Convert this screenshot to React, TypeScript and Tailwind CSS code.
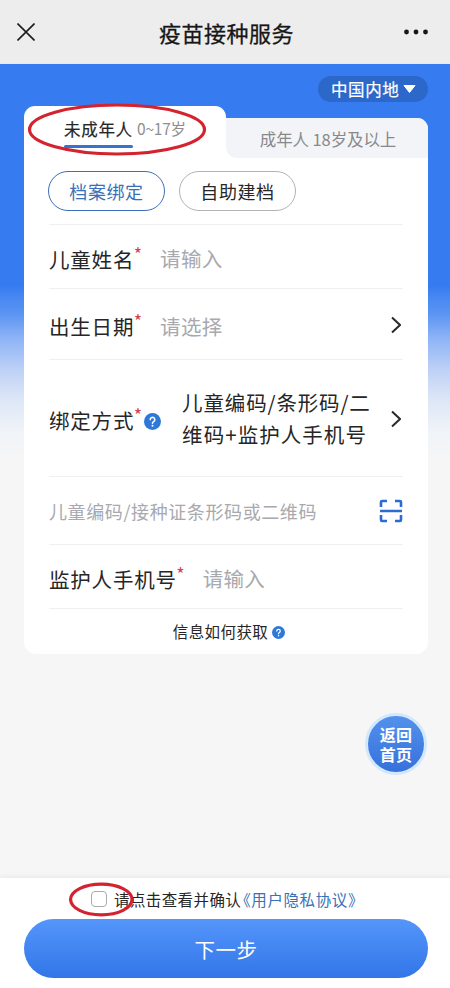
import type { ReactNode } from "react";

function Required() {
  return (
    <span className="-mt-[8px] -ml-[0.5px] text-[18px] leading-[20px] text-[#d2434c]">*</span>
  );
}

function Help({ className }: { className: string }) {
  return (
    <svg viewBox="0 0 18 18" className={className}>
      <circle cx="9" cy="9" r="9" fill="#2f78d8" />
      <path
        d="M6.6 7a2.4 2.4 0 1 1 3.6 2.1c-.8.45-1.2.8-1.2 1.7"
        fill="none"
        stroke="#fff"
        strokeWidth="1.7"
        strokeLinecap="round"
      />
      <circle cx="9" cy="13.5" r="1.05" fill="#fff" />
    </svg>
  );
}

function Chevron() {
  return (
    <svg viewBox="0 0 10 18" className="ml-auto mr-[2px] mt-[2px] h-[18px] w-[10px]">
      <path d="M1 1.5 9 9 1 16.5" fill="none" stroke="#2a2a2a" strokeWidth="2" />
    </svg>
  );
}

function Row({ className, children }: { className: string; children: ReactNode }) {
  return (
    <div className={`flex shrink-0 items-center border-b border-[#f0f0f1] ${className}`}>{children}</div>
  );
}

function Label({ children }: { children: ReactNode }) {
  return <span className="pt-[5px] text-[20.5px] tracking-[0.8px] text-[#262626]">{children}</span>;
}

function Placeholder({ children }: { children: ReactNode }) {
  return <span className="ml-[18px] pt-[4px] text-[20.5px] tracking-[0.3px] text-[#a7a9ae]">{children}</span>;
}

export default function App() {
  return (
    <div className="relative flex h-[988px] w-[450px] flex-col overflow-hidden whitespace-nowrap bg-[#f6f6f6] font-['Noto_Sans_CJK_SC',sans-serif] leading-none">
      <header className="flex h-[64px] shrink-0 items-center justify-between border-b border-[#e2e8f4] bg-[#ededed] px-[18px]">
        <svg viewBox="0 0 18 18" className="-ml-[1px] h-[18px] w-[18px]">
          <path d="M.5.5l17 17M17.5.5l-17 17" stroke="#1c1c1c" strokeWidth="1.6" />
        </svg>
        <h1 className="ml-[14px] text-[22px] tracking-[0.5px] text-[#161616] [-webkit-text-stroke:0.3px]">
          疫苗接种服务
        </h1>
        <svg viewBox="0 0 24 6" className="mr-[4px] h-[6px] w-[24px]">
          <circle cx="2.5" cy="3" r="2.4" fill="#151515" />
          <circle cx="12" cy="3" r="2.4" fill="#151515" />
          <circle cx="21.5" cy="3" r="2.4" fill="#151515" />
        </svg>
      </header>

      <main className="flex min-h-0 flex-1 flex-col bg-[linear-gradient(to_bottom,#377bf0_0px,#377bf0_222px,#4a89f2_235px,#5b95f3_250px,#8fb4f6_275px,#bdd0f6_305px,#dce6f6_335px,#eff3f8_365px,#f6f6f6_395px)] pl-6 pr-[22px]">
        <div className="flex h-[42px] shrink-0 items-start justify-end pt-[12px]">
          <button className="flex h-[26px] w-[110px] items-center rounded-full bg-[#2b68ca] pl-[13px] text-[16.5px] tracking-[0.6px] text-white [-webkit-text-stroke:0.2px]">
            中国内地
            <svg viewBox="0 0 13 8" className="ml-[4px] h-[8px] w-[13px]">
              <path d="M1 .5h11L6.5 7.5z" fill="#fff" stroke="#fff" strokeLinejoin="round" />
            </svg>
          </button>
        </div>

        <section className="flex w-[404px] shrink-0 flex-col">
          <div className="flex h-[52px] items-end">
            <div className="flex h-[52px] w-[202px] items-start rounded-t-[11px] bg-white pl-[40px] pt-[15px]">
              <span className="flex h-[27px] flex-col justify-between text-[16.5px] tracking-[0.7px] text-[#262626] [-webkit-text-stroke:0.2px]">
                未成年人
                <i className="block h-[3px] w-[69px] rounded-sm bg-[#3673cc]" />
              </span>
              <span className="ml-[4px] text-[15.5px] -tracking-[0.2px] text-[#8e8e90]">0~17岁</span>
            </div>
            <div className="h-[40px] w-[202px] rounded-tr-[11px] bg-white">
              <div className="flex h-[40px] items-center justify-center rounded-bl-[11px] rounded-tr-[11px] bg-[#f3f4f7] pl-[2px] pt-[2px] text-[16.5px] -tracking-[0.1px] text-[#89898c]">
                成年人 18岁及以上
              </div>
            </div>
          </div>

          <div className="flex h-[496px] flex-col rounded-b-[12px] bg-white px-[25px]">
            <Row className="h-[67px] gap-[14px] text-[18px]">
              <button className="-ml-[1px] h-[40px] w-[117px] rounded-full border-[1.5px] border-[#3b6fb8] tracking-[0.6px] text-[#3b70b8]">
                档案绑定
              </button>
              <button className="h-[40px] w-[117px] rounded-full border-[1.5px] border-[#b2b2b5] tracking-[0.6px] text-[#262626]">
                自助建档
              </button>
            </Row>
            <Row className="h-[64px]">
              <Label>儿童姓名</Label>
              <Required />
              <Placeholder>请输入</Placeholder>
            </Row>
            <Row className="h-[71px]">
              <Label>出生日期</Label>
              <Required />
              <Placeholder>请选择</Placeholder>
              <Chevron />
            </Row>
            <Row className="h-[117px]">
              <Label>绑定方式</Label>
              <Required />
              <Help className="ml-[2px] mt-[6px] h-[17px] w-[17px]" />
              <p className="ml-[21px] text-[20.5px] leading-[32px] tracking-[0.85px] text-[#262626]">
                儿童编码/条形码/二
                <br />
                <span className="tracking-[1.05px]">维码+监护人手机号</span>
              </p>
              <Chevron />
            </Row>
            <Row className="h-[68px]">
              <span className="text-[18px] tracking-[0.6px] text-[#a7a9ae]">儿童编码/接种证条形码或二维码</span>
              <svg viewBox="0 0 24 24" className="ml-auto h-[24px] w-[24px]">
                <path
                  d="M2 8V3Q2 2 3 2H8M16 2H21Q22 2 22 3V8M2 16V21Q2 22 3 22H8M16 22H21Q22 22 22 21V16M1 12H23"
                  fill="none"
                  stroke="#2c6bd0"
                  strokeWidth="2.6"
                />
              </svg>
            </Row>
            <Row className="h-[64px]">
              <Label>监护人手机号</Label>
              <Required />
              <Placeholder>请输入</Placeholder>
            </Row>
            <div className="flex h-[45px] items-center justify-center pl-[6px] pt-[1px] text-[15.5px] tracking-[0.4px] text-[#262626]">
              信息如何获取
              <Help className="ml-[4px] h-[13px] w-[13px]" />
            </div>
          </div>
        </section>

        <button className="ml-auto mr-[1px] mt-[59px] flex h-[62px] w-[62px] shrink-0 items-center justify-center rounded-full border-[3px] border-[#d3e8fc] bg-linear-to-b from-[#5391ed] to-[#3671db] text-[16px] font-bold leading-[20px] tracking-[0.3px] text-white">
          返回
          <br />
          首页
        </button>
      </main>

      <footer className="flex h-[110px] shrink-0 flex-col bg-white px-6 shadow-[0_-2px_5px_rgba(0,0,0,0.05)]">
        <div className="flex h-[41px] items-center pl-[67px] pt-[2px] text-[15.5px] tracking-[0.4px] text-[#262626]">
          <span className="-mt-[2px] mr-[7px] h-[16px] w-[16px] rounded-[4px] border-[1.5px] border-[#aaaaad]" />
          请点击查看并确认
          <span className="-ml-[6px] tracking-[0.6px] text-[#3a70b4]">《用户隐私协议》</span>
        </div>
        <button className="h-[59px] w-[404px] rounded-full bg-linear-to-b from-[#5596fb] to-[#3175e8] pt-[1px] text-[20.5px] tracking-[0.5px] text-white">
          下一步
        </button>
      </footer>

      <svg viewBox="0 0 450 988" className="pointer-events-none absolute inset-0 h-[988px] w-[450px]">
        <ellipse cx="117" cy="129.5" rx="87.5" ry="24.5" fill="none" stroke="#d3232f" strokeWidth="3.2" />
        <ellipse cx="101.3" cy="899.5" rx="30.7" ry="15.3" fill="none" stroke="#d3232f" strokeWidth="3.2" />
      </svg>
    </div>
  );
}
